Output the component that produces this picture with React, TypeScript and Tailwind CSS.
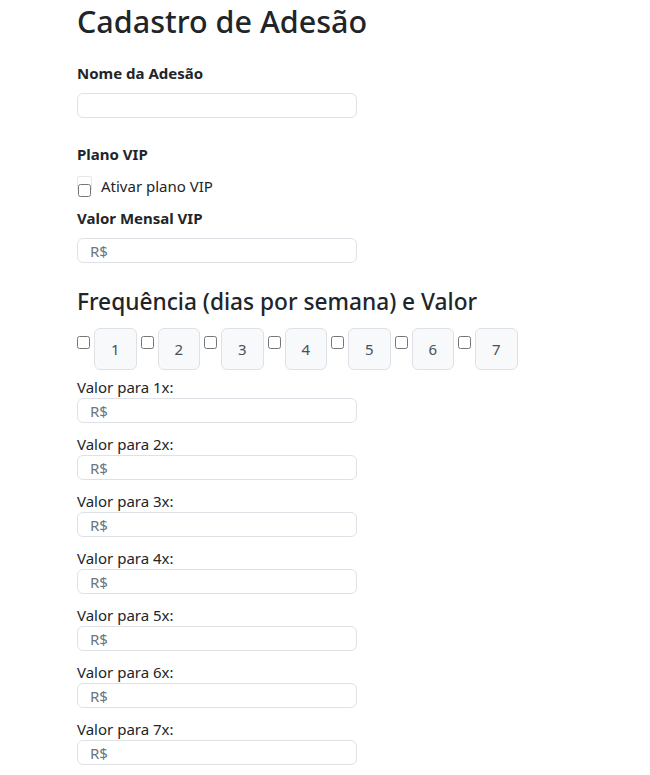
import React from "react";

const font = { fontFamily: '"Noto Sans", "Segoe UI", sans-serif' };

function MoneyInput() {
  return (
    <input
      type="text"
      placeholder="R$"
      className="block w-[280px] h-[25px] rounded-md border border-[#dee2e6] bg-white px-[12px] text-[15px] leading-[23px] text-[#212529] placeholder:text-[#6c757d] outline-none"
    />
  );
}

export default function App() {
  const days = [1, 2, 3, 4, 5, 6, 7];
  return (
    <div className="min-h-[775px] bg-white text-[#212529] pl-[77px]" style={font}>
      <h1 className="text-[30.5px] font-medium leading-[40px] m-0 pt-[1px]">Cadastro de Adesão</h1>

      <div className="mt-[20px] text-[15px] font-bold leading-[24px]">Nome da Adesão</div>
      <input
        type="text"
        className="mt-[8px] block w-[280px] h-[25px] rounded-md border border-[#dee2e6] bg-white outline-none"
      />

      <div className="mt-[24px] text-[15px] font-bold leading-[24px]">Plano VIP</div>
      <div className="mt-[8px] flex items-center h-[24px]">
        <div className="relative w-[16px] h-[24px]">
          <div className="absolute left-0 top-[2px] w-[15px] h-[15px] border border-[#e5e7eb] rounded-[2px]"></div>
          <input type="checkbox" className="absolute left-[1px] top-[10px] m-0 w-[13px] h-[13px]" />
        </div>
        <span className="ml-[8px] text-[15px] leading-[24px]">Ativar plano VIP</span>
      </div>
      <div className="mt-[8px] text-[15px] font-bold leading-[24px]">Valor Mensal VIP</div>
      <div className="mt-[8px]">
        <MoneyInput />
      </div>

      <h3 className="mt-[24px] text-[22.7px] font-medium leading-[30px]">Frequência (dias por semana) e Valor</h3>

      <div className="mt-[11px] flex items-start gap-[4px]">
        {days.map((d) => (
          <div key={d} className="flex items-start gap-[4px]">
            <input type="checkbox" className="m-0 mt-[8px] w-[13px] h-[13px]" />
            <div className="w-[42.5px] h-[42px] rounded-md border border-[#dee2e6] bg-[#f8f9fa] flex items-center justify-center text-[15px] text-[#495057]">
              {d}
            </div>
          </div>
        ))}
      </div>

      <div className="mt-[7px]">
        {days.map((d) => (
          <div key={d} className="mb-[11px]">
            <div className="text-[15px] leading-[20px]">Valor para {d}x:</div>
            <div className="mt-[1px]">
              <MoneyInput />
            </div>
          </div>
        ))}
      </div>
    </div>
  );
}
